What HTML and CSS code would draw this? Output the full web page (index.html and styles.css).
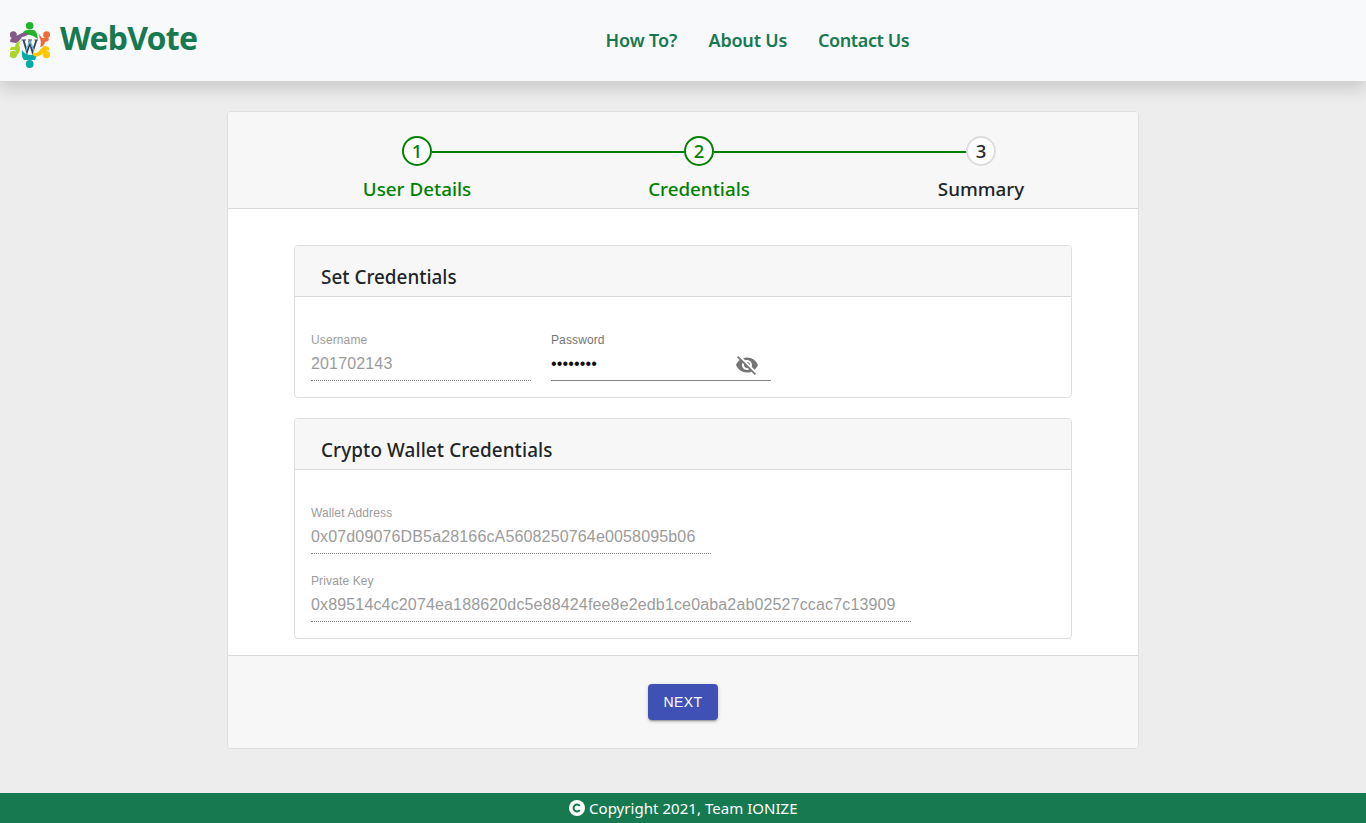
FILE: index.html
```html
<!DOCTYPE html>
<html lang="en">
<head>
<meta charset="utf-8">
<title>WebVote</title>
<link rel="stylesheet" href="styles.css">
</head>
<body>
<header class="navbar">
  <a class="brand">
    <svg class="logo" viewBox="0 0 40 46" width="40" height="46">
      <path d="M12 13Q13 8 18 8L24 8Q27 9 28 17L23 14Q19 12 12 13Z" fill="#20b52b"/>
      <path d="M0 20Q0 15 5 14.500L12 11Q17 10 18.500 12Q17 14 12 15Q9 20 6 21Z" fill="#855a8b"/>
      <path d="M29 12L32 16H38Q40 17 38 19L35 20Q34 25 30 25Q32 20 29.500 16Z" fill="#f26b3a"/>
      <path d="M0 28Q0 24 5 25Q5 20 11 19Q8 22 10 26Q10 31 7 33L5 28Z" fill="#acd52b"/>
      <path d="M12 28Q15 33 21 33H27L25 38H14Q11 35 12 28Z" fill="#08aaa9"/>
      <path d="M21 31Q27 32 30 28L34 24Q40 24 39.500 28L35 29Q30 36 24 34Z" fill="#ffc700"/>
      <circle cx="19.700" cy="3.800" r="3.800" fill="#20b52b"/>
      <circle cx="3.300" cy="12.700" r="3.500" fill="#855a8b"/>
      <circle cx="36.600" cy="12.700" r="3.500" fill="#f26b3a"/>
      <circle cx="3.300" cy="32.500" r="3.700" fill="#acd52b"/>
      <circle cx="36.400" cy="32.500" r="3.700" fill="#ffc700"/>
      <circle cx="19.700" cy="42" r="3.900" fill="#08aaa9"/>
      <path d="M13.500 18L17 30L20.500 19M19 19L22.500 30L26.500 18" fill="none" stroke="#314957" stroke-width="1.900"/>
      <path d="M15.500 29L20 19L24 29" fill="none" stroke="#70b4d2" stroke-width="1.300"/>
      <path d="M11.500 18H16M18 18H22M24.500 18H28" stroke="#314957" stroke-width="1"/>
    </svg>
    <span class="brand-name">WebVote</span>
  </a>
  <nav class="links">
    <a class="howto">How To?</a><a class="about">About Us</a><a class="contact">Contact Us</a>
  </nav>
</header>
<main class="wizard">
  <ol class="steps">
    <li class="step done"><span class="dot">1</span><span class="label">User Details</span></li>
    <li class="step done"><span class="dot">2</span><span class="label">Credentials</span></li>
    <li class="step"><span class="dot">3</span><span class="label">Summary</span></li>
  </ol>
  <div class="wizard-body">
    <section class="panel">
      <h2 class="panel-title">Set Credentials</h2>
      <div class="fields row">
        <div class="field disabled small"><span class="name">Username</span><span class="value">201702143</span></div>
        <div class="field small"><span class="name">Password</span>
          <span class="value secret"><span class="bullets">••••••••</span>
            <svg class="eye" viewBox="0 0 24 24" width="24" height="24"><path fill="#757575" d="M12 7c2.760 0 5 2.240 5 5 0 .650-.130 1.260-.360 1.830l2.920 2.920c1.510-1.260 2.700-2.890 3.430-4.750-1.730-4.390-6-7.500-11-7.500-1.400 0-2.740.250-3.980.700l2.160 2.160C10.740 7.130 11.350 7 12 7zM2 4.270l2.280 2.280.460.460C3.080 8.300 1.780 10.020 1 12c1.730 4.390 6 7.500 11 7.500 1.550 0 3.030-.300 4.380-.840l.420.420L19.730 22 21 20.730 3.270 3 2 4.270zM7.530 9.800l1.550 1.550c-.050.210-.080.430-.080.650 0 1.660 1.340 3 3 3 .220 0 .440-.030.650-.080l1.550 1.550c-.670.330-1.410.530-2.200.530-2.760 0-5-2.240-5-5 0-.790.200-1.530.530-2.200zm4.310-.780l3.150 3.150.020-.160c0-1.660-1.340-3-3-3l-.170.010z"/></svg>
          </span>
        </div>
      </div>
    </section>
    <section class="panel">
      <h2 class="panel-title wide">Crypto Wallet Credentials</h2>
      <div class="fields">
        <div class="field disabled medium"><span class="name">Wallet Address</span><span class="value">0x07d09076DB5a28166cA5608250764e0058095b06</span></div>
        <div class="field disabled large"><span class="name">Private Key</span><span class="value">0x89514c4c2074ea188620dc5e88424fee8e2edb1ce0aba2ab02527ccac7c13909</span></div>
      </div>
    </section>
  </div>
  <div class="actions"><button class="next">NEXT</button></div>
</main>
<footer class="footer">
  <svg viewBox="0 0 16 16" width="16" height="16"><circle cx="8" cy="8" r="8" fill="#fff"/><path d="M10.800 10.100A3.500 3.500 0 1 1 10.800 5.900" fill="none" stroke="#177950" stroke-width="2"/></svg>
  <span class="copyright">Copyright 2021, Team IONIZE</span>
</footer>
</body>
</html>
```
FILE: styles.css
```css
* { box-sizing: border-box; }
body {
  margin: 0;
  height: 823px;
  display: flex;
  flex-direction: column;
  background: #ededed;
  color: #212529;
  font-family: "Noto Sans", "Open Sans", sans-serif;
  overflow: hidden;
}
.navbar {
  height: 81px;
  flex: none;
  display: flex;
  background: #f8f9fb;
  box-shadow: 0 8px 16px rgba(0, 0, 0, .15);
  color: #177950;
}
.brand { display: flex; width: 590px; padding: 22px 0 0 10px; }
.logo { flex: none; }
.brand-name { margin: -6px 0 0 10px; font-size: 32px; line-height: 44px; font-weight: 700; letter-spacing: -.8px; white-space: nowrap; }
.links { display: flex; padding: 27px 0 0 15.500px; gap: 31px; font-size: 18px; line-height: 26px; font-weight: 600; white-space: nowrap; }
.howto { width: 72px; letter-spacing: -.1px; }
.about { width: 78.500px; letter-spacing: -.2px; }
.contact { letter-spacing: -.4px; }
.wizard {
  width: 912px;
  height: 638px;
  margin: 30px auto 0;
  flex: none;
  display: flex;
  flex-direction: column;
  background: #fff;
  border: 1px solid #dedede;
  border-radius: 4px;
}
.steps {
  list-style: none;
  margin: 0;
  height: 97px;
  padding: 24px 16px 0 48px;
  display: flex;
  background: #f7f7f7;
  border-bottom: 1px solid #d9d9d9;
  border-radius: 3px 3px 0 0;
}
.step {
  flex: 1;
  display: grid;
  grid-template-columns: 1fr 30px 1fr;
  align-items: center;
  align-content: start;
}
.step::before, .step::after { content: ""; height: 2px; margin-top: 2px; grid-row: 1; }
.step::before { grid-column: 1; }
.step::after { grid-column: 3; }
.step.done::after, .step.done + .step::before { background: green; }
.step.done + .step::before { margin-right: -1px; }
.dot {
  grid-column: 2;
  grid-row: 1;
  width: 30px;
  height: 30px;
  border: 2px solid #ddd;
  border-radius: 50%;
  background: #fff;
  text-align: center;
  font-size: 18.500px;
  line-height: 26px;
  font-weight: 500;
}
.label { grid-column: 1 / -1; justify-self: center; margin-top: 10px; font-size: 18.800px; line-height: 26px; font-weight: 500; white-space: nowrap; }
.done .dot { border-color: green; }
.done { color: green; }
.wizard-body { flex: 1; display: flex; flex-direction: column; gap: 20px; padding: 36px 66px 0; }
.panel { border: 1px solid #dedede; border-radius: 4px; }
.panel-title {
  margin: 0;
  height: 51px;
  padding: 18px 0 0 26px;
  background: #f7f7f7;
  border-bottom: 1px solid #d9d9d9;
  border-radius: 3px 3px 0 0;
  font-size: 18.900px;
  line-height: 26px;
  font-weight: 500;
}
.panel-title.wide { letter-spacing: .1px; }
.fields { display: flex; flex-direction: column; gap: 20px; padding: 36px 16px 16px; font-family: "Liberation Sans", Arial, sans-serif; }
.fields.row { flex-direction: row; }
.field { height: 48px; border-bottom: 1px solid #858585; color: #111; }
.field.disabled { border-bottom: 1px dotted #858585; color: #9b9b9b; }
.small { width: 220px; }
.medium { width: 400px; }
.large { width: 600px; }
.name { display: block; font-size: 12px; line-height: 14px; letter-spacing: .12px; color: #757575; }
.disabled .name { color: #9b9b9b; }
.value { display: block; margin-top: 7px; font-size: 16px; line-height: 20px; letter-spacing: .15px; white-space: nowrap; }
.secret { display: flex; justify-content: space-between; padding-right: 12px; }
.eye { flex: none; margin-top: -1px; }
.actions {
  height: 93px;
  display: flex;
  align-items: center;
  justify-content: center;
  background: #f7f7f7;
  border-top: 1px solid #d9d9d9;
  border-radius: 0 0 3px 3px;
}
.next {
  width: 70px;
  height: 36px;
  padding: 0;
  border: 0;
  border-radius: 4px;
  background: #3f51b5;
  color: #fff;
  font: 500 14px/36px "Liberation Sans", Arial, sans-serif;
  letter-spacing: .4px;
  box-shadow: 0 3px 1px -2px rgba(0, 0, 0, .2), 0 2px 2px rgba(0, 0, 0, .14), 0 1px 5px rgba(0, 0, 0, .12);
}
.footer {
  height: 30px;
  margin-top: auto;
  flex: none;
  display: flex;
  align-items: center;
  padding-left: 569px;
  gap: 4px;
  background: #177950;
  color: #fff;
  font-size: 15px;
  letter-spacing: .04px;
  white-space: nowrap;
}
```
